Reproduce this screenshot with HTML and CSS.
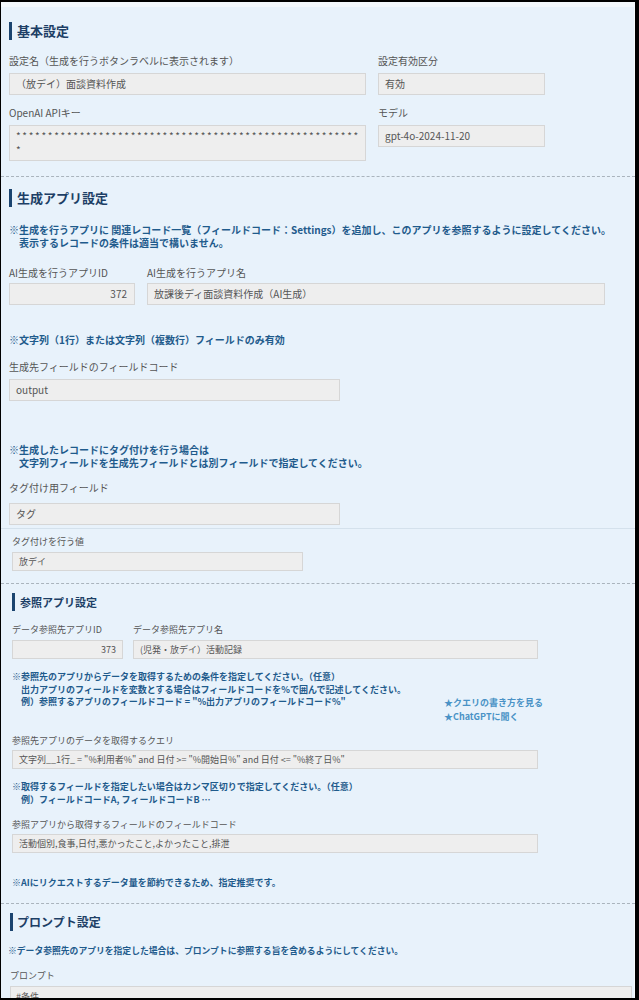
FILE: index.html
```html
<!DOCTYPE html>
<html lang="ja">
<head>
<meta charset="utf-8">
<title>設定</title>
<link rel="stylesheet" href="styles.css">
</head>
<body>
<div class="frame">
  <div class="topstrip"></div>

  <section class="sec sec-basic">
    <h2 class="sec-title">基本設定</h2>
    <div class="grid-basic">
      <div class="fld">
        <div class="lbl">設定名（生成を行うボタンラベルに表示されます）</div>
        <div class="box">（放デイ）面談資料作成</div>
      </div>
      <div class="fld">
        <div class="lbl">設定有効区分</div>
        <div class="box">有効</div>
      </div>
      <div class="fld">
        <div class="lbl">OpenAI APIキー</div>
        <div class="box box-multi">******************************************************<br>*</div>
      </div>
      <div class="fld">
        <div class="lbl">モデル</div>
        <div class="box">gpt-4o-2024-11-20</div>
      </div>
    </div>
  </section>

  <hr class="dash">

  <section class="sec sec-gen">
    <h2 class="sec-title">生成アプリ設定</h2>
    <p class="note note-a">※生成を行うアプリに 関連レコード一覧（フィールドコード：Settings）を追加し、このアプリを参照するように設定してください。<br>　表示するレコードの条件は適当で構いません。</p>
    <div class="row-app">
      <div class="fld w-id">
        <div class="lbl">AI生成を行うアプリID</div>
        <div class="box num">372</div>
      </div>
      <div class="fld w-name">
        <div class="lbl">AI生成を行うアプリ名</div>
        <div class="box">放課後ディ面談資料作成（AI生成）</div>
      </div>
    </div>
    <p class="note note-b">※文字列（1行）または文字列（複数行）フィールドのみ有効</p>
    <div class="fld w-half f-output">
      <div class="lbl">生成先フィールドのフィールドコード</div>
      <div class="box">output</div>
    </div>
    <p class="note note-c">※生成したレコードにタグ付けを行う場合は<br>　文字列フィールドを生成先フィールドとは別フィールドで指定してください。</p>
    <div class="fld w-half f-tag">
      <div class="lbl">タグ付け用フィールド</div>
      <div class="box">タグ</div>
    </div>
  </section>

  <hr class="solid">

  <section class="sec-small">
    <div class="fld-s w-tagval">
      <div class="lbl-s">タグ付けを行う値</div>
      <div class="box-s">放デイ</div>
    </div>
  </section>

  <hr class="dash dash-2">

  <section class="sec-ref">
    <h2 class="sec-title-s">参照アプリ設定</h2>
    <div class="row-ref">
      <div class="fld-s w-rid">
        <div class="lbl-s">データ参照先アプリID</div>
        <div class="box-s num">373</div>
      </div>
      <div class="fld-s w-rname">
        <div class="lbl-s">データ参照先アプリ名</div>
        <div class="box-s">(児発・放デイ）活動記録</div>
      </div>
    </div>
    <div class="query-help">
      <p class="note-s note-q">※参照先のアプリからデータを取得するための条件を指定してください。（任意）<br>　出力アプリのフィールドを変数とする場合はフィールドコードを%で囲んで記述してください。<br>　例）参照するアプリのフィールドコード = "%出力アプリのフィールドコード%"</p>
      <div class="links">
        <a class="link">★クエリの書き方を見る</a>
        <a class="link">★ChatGPTに聞く</a>
      </div>
    </div>
    <div class="fld-s w-wide f-query">
      <div class="lbl-s">参照先アプリのデータを取得するクエリ</div>
      <div class="box-s">文字列__1行_ = "%利用者%" and 日付 &gt;= "%開始日%" and 日付 &lt;= "%終了日%"</div>
    </div>
    <p class="note-s note-f">※取得するフィールドを指定したい場合はカンマ区切りで指定してください。（任意）<br>　例）フィールドコードA, フィールドコードB …</p>
    <div class="fld-s w-wide f-fields">
      <div class="lbl-s">参照アプリから取得するフィールドのフィールドコード</div>
      <div class="box-s">活動個別,食事,日付,悪かったこと,よかったこと,排泄</div>
    </div>
    <p class="note-s note-r">※AIにリクエストするデータ量を節約できるため、指定推奨です。</p>
  </section>

  <hr class="dash dash-3">

  <section class="sec-prompt">
    <h2 class="sec-title-p">プロンプト設定</h2>
    <p class="note-s note-p">※データ参照先のアプリを指定した場合は、プロンプトに参照する旨を含めるようにしてください。</p>
    <div class="fld-s f-prompt">
      <div class="lbl-s">プロンプト</div>
      <div class="box-s box-prompt">#条件</div>
    </div>
  </section>
</div>
</body>
</html>
```

FILE: styles.css
```css
* {
  box-sizing: border-box;
  margin: 0;
  padding: 0;
}

body {
  margin: 0;
  background: #ffffff;
  font-family: "Noto Sans CJK JP", "Noto Sans", sans-serif;
  color: #555555;
}

.frame {
  width: 639px;
  height: 1000px;
  border-style: solid;
  border-color: #000000;
  border-width: 2px 4px 2px 1px;
  background: #e8f2fb;
  overflow: hidden;
  box-shadow: inset -1px 0 0 #f6fafd;
}

.topstrip {
  height: 5px;
  background: #f3f8fc;
}

/* ---------- section titles ---------- */
.sec-title {
  margin-top: 15px;
  height: 18px;
  line-height: 18px;
  border-left: 3px solid #1b446f;
  padding-left: 5px;
  font-size: 13px;
  font-weight: bold;
  color: #1d3f66;
}

.sec-gen .sec-title {
  margin-top: 12px;
}

.sec-title-s {
  margin-top: 9px;
  height: 18px;
  line-height: 18px;
  border-left: 3px solid #1b446f;
  padding-left: 5px;
  font-size: 11px;
  font-weight: bold;
  color: #1d3f66;
}

.sec-title-p {
  margin-top: 9px;
  height: 18px;
  line-height: 18px;
  border-left: 3px solid #1b446f;
  padding-left: 4px;
  font-size: 12px;
  font-weight: bold;
  color: #1d3f66;
}

/* ---------- sections ---------- */
.sec {
  padding-left: 8px;
}

.sec-small {
  padding-left: 11px;
}

.sec-ref {
  padding-left: 11px;
}

.sec-prompt {
  padding-left: 9px;
}

/* ---------- rules ---------- */
.dash {
  border: 0;
  border-top: 1px dashed #aab4bd;
  margin-top: 15px;
  height: 0;
}

.dash-2 {
  margin-top: 12px;
}

.dash-3 {
  margin-top: 14px;
}

.solid {
  border: 0;
  border-top: 1px solid #d4e1ec;
  margin-top: 3px;
  height: 0;
}

/* ---------- fields (large scale) ---------- */
.lbl {
  font-size: 10px;
  line-height: 14px;
  height: 14px;
  white-space: nowrap;
  color: #555555;
  margin-bottom: 5px;
}

.box {
  height: 22px;
  padding: 3px 6px;
  font-size: 10px;
  line-height: 14px;
  background: #eeeeee;
  border: 1px solid #d6d6d6;
  color: #555555;
  white-space: nowrap;
  overflow: hidden;
}

.box-multi {
  height: 36px;
  letter-spacing: 1.7px;
}

.num {
  text-align: right;
  padding-right: 7px;
}

.grid-basic {
  display: grid;
  grid-template-columns: 357px 167px;
  column-gap: 12px;
  row-gap: 11px;
  align-items: start;
  margin-top: 14px;
}

.row-app {
  display: flex;
  gap: 12px;
  margin-top: 17px;
}

.row-app .lbl {
  margin-bottom: 3px;
}

.w-id {
  width: 126px;
}

.w-name {
  width: 458px;
}

.w-half {
  width: 331px;
}

.f-output {
  margin-top: 14px;
}

.f-tag {
  margin-top: 12px;
}

.f-tag .lbl {
  margin-bottom: 8px;
}

/* ---------- notes ---------- */
.note {
  font-size: 10px;
  line-height: 13px;
  font-weight: bold;
  color: #1f5b8c;
  white-space: nowrap;
}

.note-a {
  margin-top: 16px;
}

.note-b {
  margin-top: 28px;
}

.note-c {
  margin-top: 42px;
}

/* ---------- fields (small scale) ---------- */
.lbl-s {
  font-size: 9px;
  line-height: 12px;
  height: 12px;
  white-space: nowrap;
  color: #555555;
  margin-bottom: 4px;
}

.box-s {
  height: 19px;
  padding: 2px 6px;
  font-size: 9px;
  line-height: 13px;
  background: #eeeeee;
  border: 1px solid #d6d6d6;
  color: #555555;
  white-space: nowrap;
  overflow: hidden;
}

.w-tagval {
  width: 291px;
  margin-top: 7px;
}

.row-ref {
  display: flex;
  gap: 10px;
  margin-top: 13px;
}

.w-rid {
  width: 111px;
}

.w-rname {
  width: 405px;
}

.w-wide {
  width: 526px;
}

.query-help {
  display: flex;
  align-items: flex-start;
  margin-top: 12px;
}

.note-s {
  font-size: 9px;
  line-height: 12.5px;
  font-weight: bold;
  color: #1f5b8c;
  white-space: nowrap;
}

.note-q {
  width: 432px;
}

.links {
  display: flex;
  flex-direction: column;
  margin-top: 25px;
}

.link {
  font-size: 9px;
  line-height: 13.5px;
  font-weight: bold;
  color: #4a92c6;
  white-space: nowrap;
}

.f-query {
  margin-top: 12px;
}

.f-query .lbl-s,
.f-fields .lbl-s {
  margin-bottom: 3px;
}

.note-f {
  margin-top: 11px;
  line-height: 13px;
}

.f-fields {
  margin-top: 13px;
}

.note-r {
  margin-top: 24px;
  line-height: 12px;
}

.note-p {
  margin-top: 14px;
  margin-left: -2px;
  line-height: 12px;
  font-size: 8.8px;
}

.f-prompt {
  margin-top: 13px;
  width: 622px;
}

.box-prompt {
  height: 40px;
  padding-top: 3px;
  padding-left: 5px;
}
```
